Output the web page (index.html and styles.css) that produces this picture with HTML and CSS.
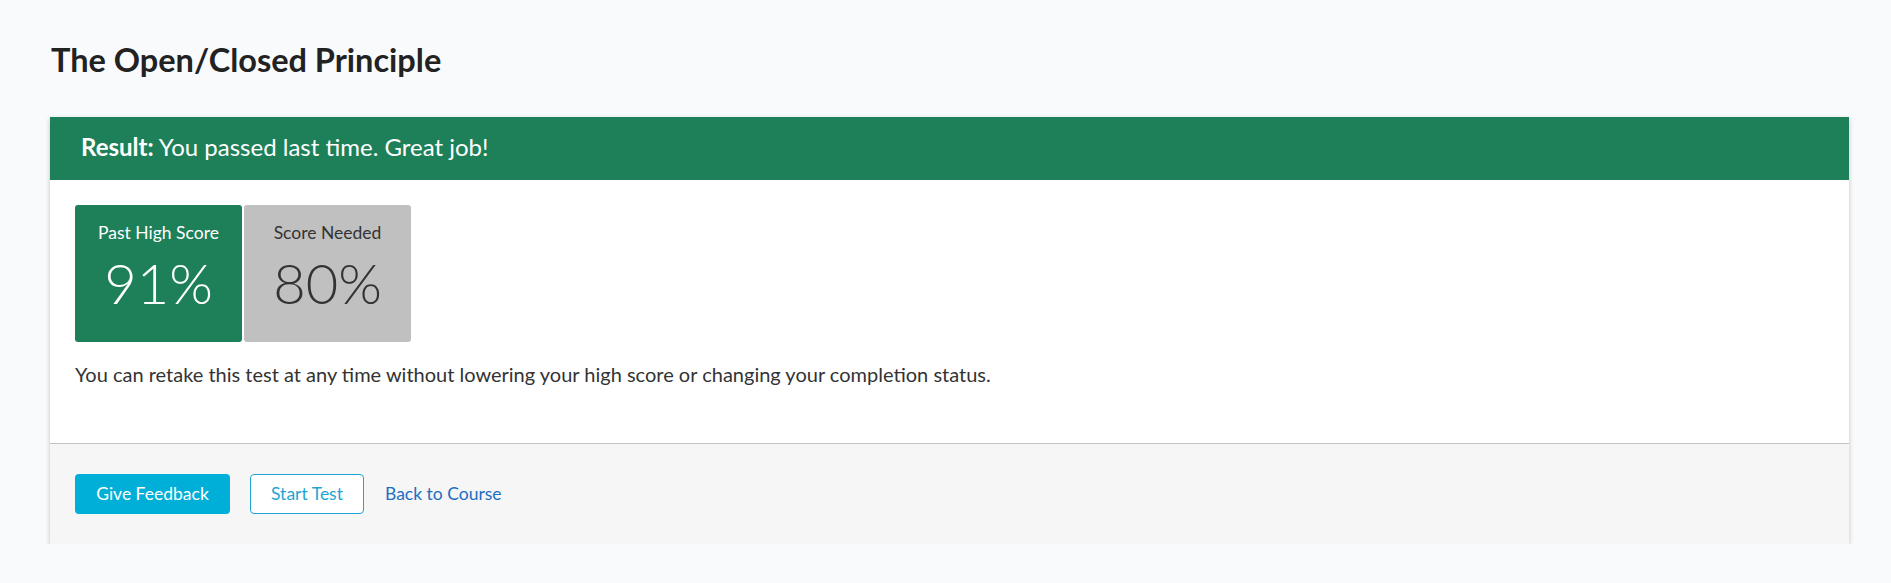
FILE: index.html
```html
<!DOCTYPE html>
<html lang="en">
<head>
<meta charset="utf-8">
<title>The Open/Closed Principle</title>
<link rel="stylesheet" href="styles.css">
</head>
<body>
<main class="page">
  <h1 class="title">The Open/Closed Principle</h1>
  <section class="card">
    <header class="card-head"><strong>Result:</strong> You passed last time. Great job!</header>
    <div class="card-body">
      <div class="scores">
        <div class="score score-pass">
          <div class="score-label">Past High Score</div>
          <div class="score-value">91%</div>
        </div>
        <div class="score score-needed">
          <div class="score-label">Score Needed</div>
          <div class="score-value">80%</div>
        </div>
      </div>
      <p class="note">You can retake this test at any time without lowering your high score or changing your completion status.</p>
    </div>
    <footer class="card-foot">
      <a class="btn btn-primary" href="#">Give Feedback</a>
      <a class="btn btn-outline" href="#">Start Test</a>
      <a class="link" href="#">Back to Course</a>
    </footer>
  </section>
</main>
</body>
</html>
```
FILE: styles.css
```css
* { box-sizing: border-box; }
html, body { margin: 0; padding: 0; }
body {
  background: #f9fafc;
  font-family: Lato, "Open Sans", "Liberation Sans", sans-serif;
  color: #333;
}
.page {
  padding: 40px 42px 0 50px;
}
.title {
  margin: 0 0 37px 1px;
  font-size: 32.5px;
  line-height: 40px;
  font-weight: 700;
  color: #222;
}
.card {
  background: #fff;
  box-shadow: 0 2px 5px rgba(0,0,0,0.22);
}
.card-head {
  background: #1d8059;
  color: #fff;
  font-size: 24px;
  line-height: 29px;
  padding: 15px 30px 19px 31px;
}
.card-head strong { font-weight: 700; }
.card-body {
  padding: 25px 25px 54px;
}
.scores {
  display: flex;
  gap: 2px;
}
.score {
  width: 167px;
  height: 137px;
  border-radius: 3px;
  text-align: center;
  padding-top: 16.5px;
}
.score-pass { background: #1d8059; color: #fff; }
.score-needed { background: #c0c0c0; color: #333; }
.score-label {
  font-size: 17.5px;
  line-height: 22px;
}
.score-value {
  margin-top: 11px;
  font-size: 56px;
  line-height: 56px;
  font-weight: 300;
}
.note {
  margin: 16.5px 0 0;
  font-size: 20px;
  line-height: 30px;
}
.card-foot {
  background: #f6f6f6;
  border-top: 1px solid #c2c2c2;
  padding: 30px 25px 30px;
  display: flex;
  align-items: center;
  gap: 20px;
}
.btn {
  display: inline-flex;
  align-items: center;
  justify-content: center;
  height: 40px;
  border-radius: 4px;
  font-size: 17.5px;
  text-decoration: none;
}
.btn-primary {
  width: 155px;
  background: #00afd7;
  color: #fff;
}
.btn-outline {
  width: 114px;
  background: #fff;
  color: #1ea5d4;
  border: 1px solid #1ea5d4;
}
.link {
  margin-left: 1px;
  font-size: 17.5px;
  color: #1d6fc2;
  text-decoration: none;
}
```
